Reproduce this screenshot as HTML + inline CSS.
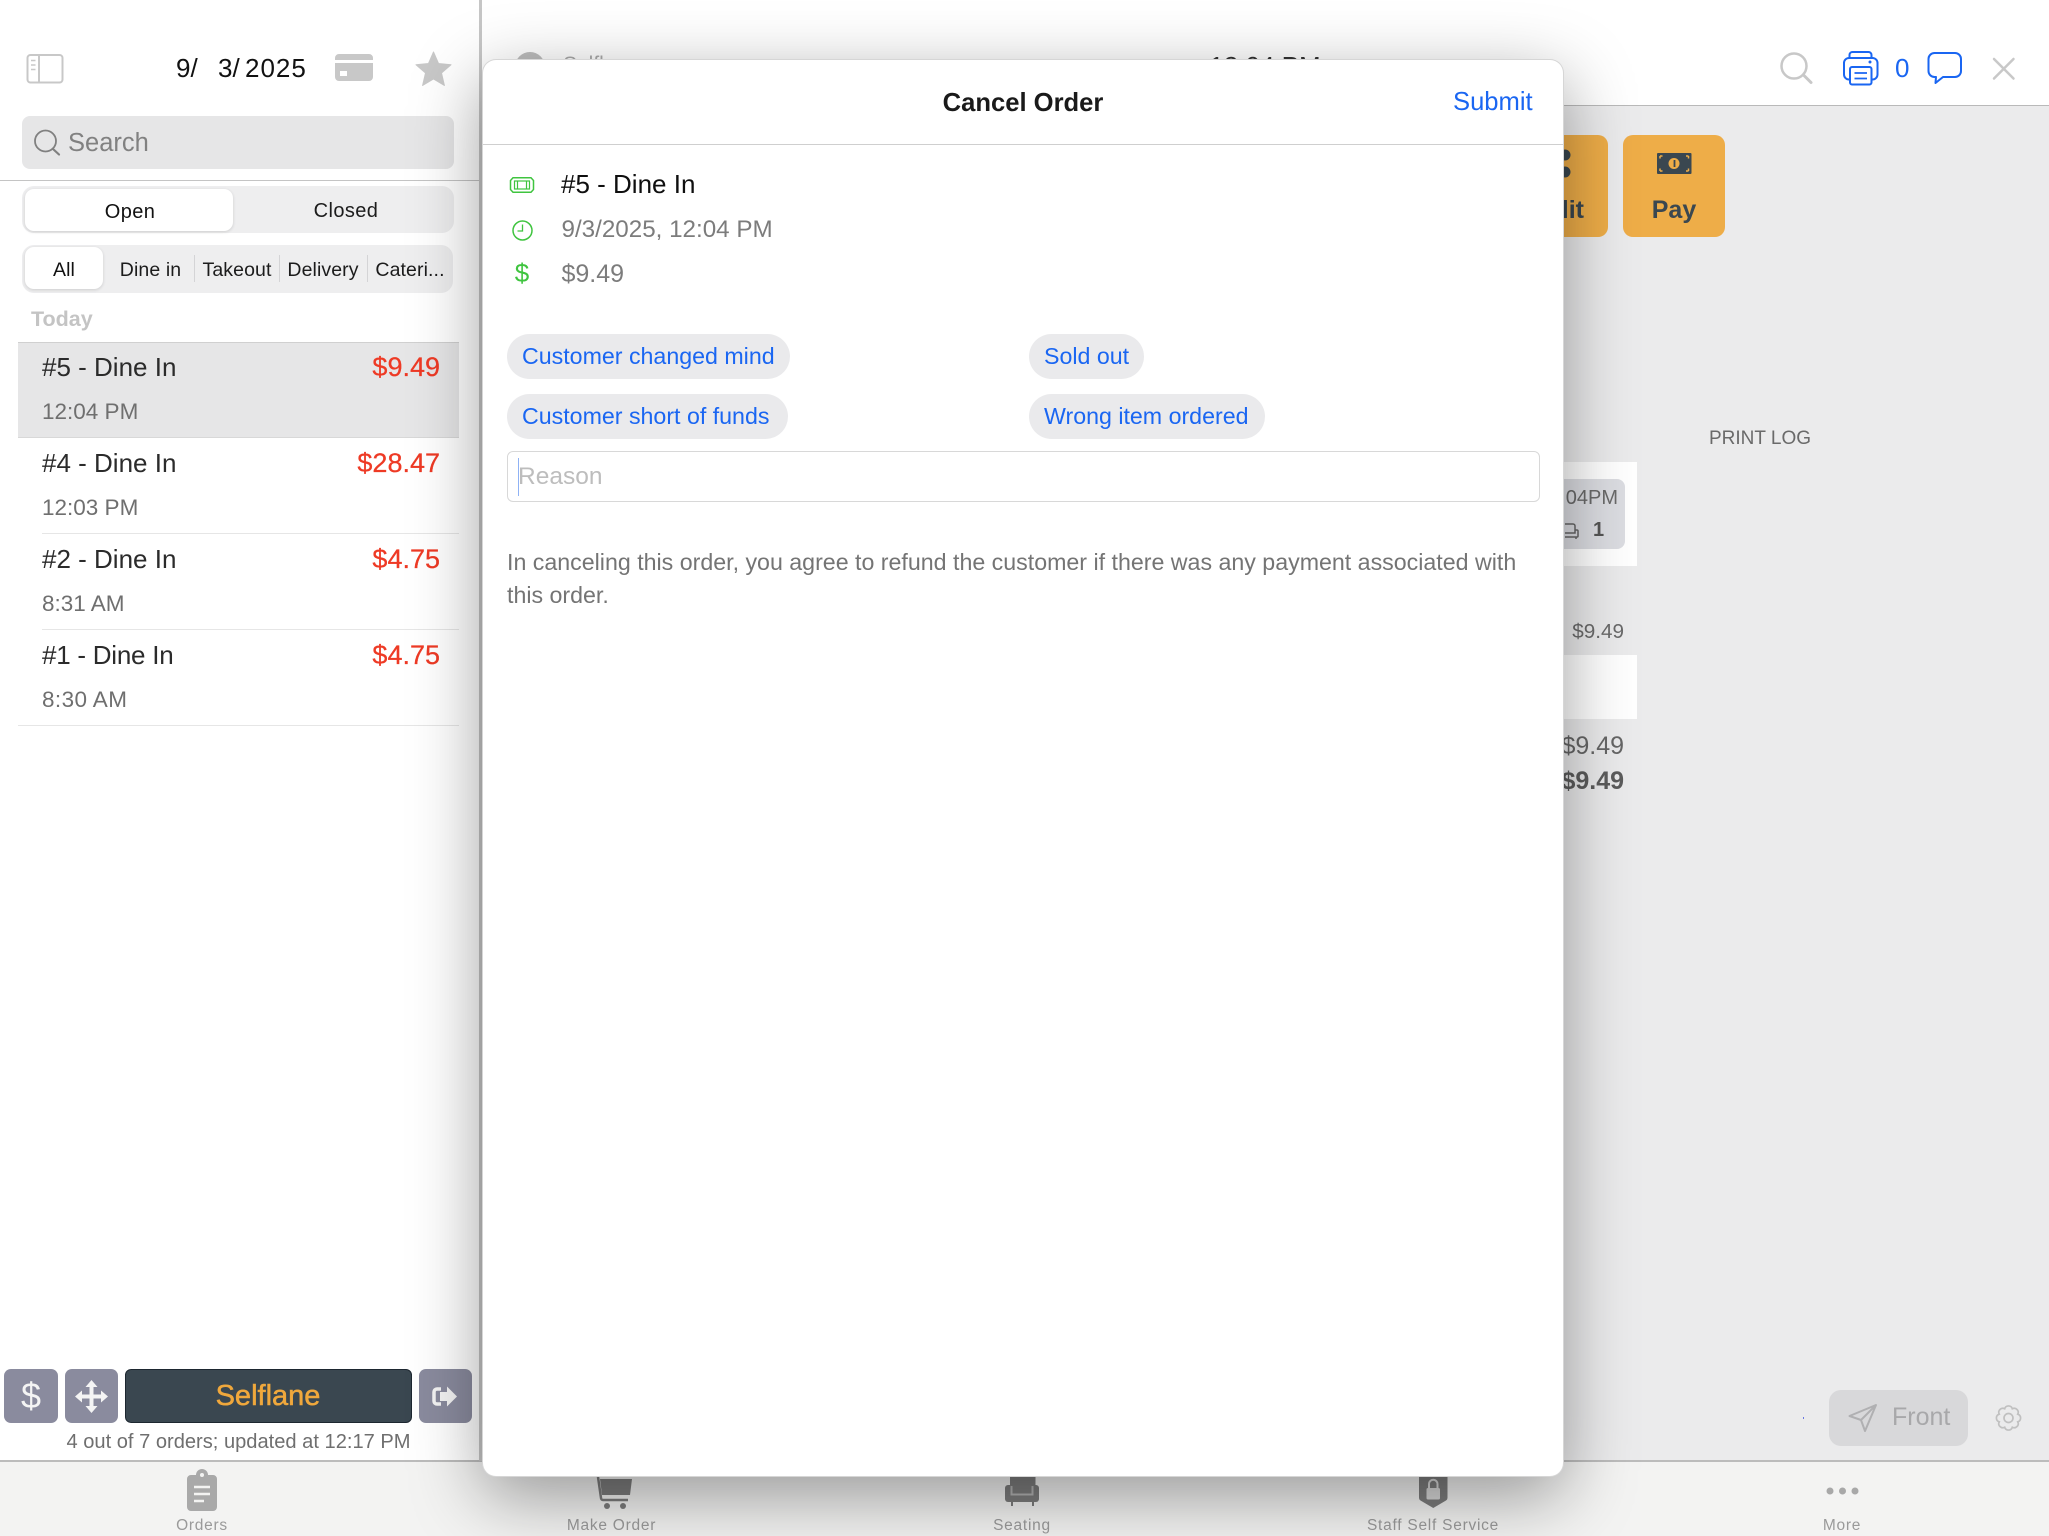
<!DOCTYPE html>
<html lang="en"><head><meta charset="utf-8"><title>Cancel Order</title>
<style>
html,body{margin:0;padding:0;background:#fff;width:2049px;height:1536px;overflow:hidden}
body{font-family:"Liberation Sans",sans-serif}
#p{position:absolute;left:0;top:0;width:2049px;height:1536px;overflow:hidden}
.b{position:absolute;box-sizing:border-box}
.t{position:absolute;white-space:nowrap;line-height:40px;height:40px;margin-top:-20px}
.c{transform:translateX(-50%)}
svg{position:absolute;left:0;top:0}
.name{font-size:26px;color:#2b2b2b;left:42px}
.time{font-size:22.5px;color:#6f6f6f;left:42px}
.price{font-size:27px;color:#ee3a25;right:1609px;-webkit-text-stroke:.25px #ee3a25}
.seg{font-size:19.5px;color:#1c1c1c;letter-spacing:.1px}
.tab{font-size:15.5px;letter-spacing:.75px;color:#9a9a9a}
.chip{position:absolute;box-sizing:border-box;background:#eaeaec;border-radius:23px;height:45px;line-height:45px;font-size:23.2px;color:#1a66f2;padding-left:15px;white-space:nowrap}
</style></head>
<body>
<div id="p">
<!-- main background -->
<div class="b" style="left:482px;top:0;width:1567px;height:105px;background:#fff"></div>
<div class="b" style="left:482px;top:105px;width:1567px;height:1356px;background:#ebebec;border-top:1.5px solid #b9b9b9"></div>
<div class="b" style="left:0;top:1460px;width:2049px;height:76px;background:#f3f3f2;border-top:2px solid #bcbcbc"></div>
<div class="b" style="left:479px;top:0;width:3px;height:1461px;background:#c6c6c6"></div>

<!-- behind modal -->
<div class="b" style="left:515px;top:52px;width:30px;height:30px;border-radius:50%;background:#bdbdbd"></div>
<div class="t" style="left:563px;top:65px;font-size:21px;color:#aaa">Selfl</div>
<div class="t c" style="left:1265px;top:66px;font-size:26px;color:#333">12:04 PM</div>

<div class="b" style="left:1450px;top:135px;width:158px;height:102px;background:#eead48;border-radius:10px"></div>
<div class="b" style="left:1623px;top:135px;width:102px;height:102px;background:#eead48;border-radius:10px"></div>
<div class="t" style="left:1500px;top:210px;width:84px;text-align:right;font-size:25px;font-weight:bold;color:#3a4750">Split</div>
<div class="t c" style="left:1674px;top:210px;font-size:25px;font-weight:bold;color:#3a4750">Pay</div>

<div class="t c" style="left:1760px;top:439px;font-size:19px;color:#6a6a6a">PRINT LOG</div>
<div class="b" style="left:1300px;top:462px;width:337px;height:104px;background:#fff"></div>
<div class="b" style="left:1300px;top:479px;width:325px;height:70px;background:#dcdde2;border-radius:8px"></div>
<div class="t" style="right:431px;top:498px;font-size:20px;color:#6a6a6a">12:04PM</div>
<div class="t" style="left:1593px;top:530px;font-size:20px;font-weight:bold;color:#555">1</div>
<div class="t" style="right:425px;top:632px;font-size:20.7px;color:#6a6a6a">$9.49</div>
<div class="b" style="left:1300px;top:655px;width:337px;height:64px;background:#fff"></div>
<div class="t" style="right:425px;top:746px;font-size:25px;color:#666">$9.49</div>
<div class="t" style="right:425px;top:781px;font-size:25px;font-weight:bold;color:#5c5c5c">$9.49</div>

<div class="b" style="left:1829px;top:1390px;width:139px;height:56px;background:#d8d8da;border-radius:12px"></div>
<div class="t" style="left:1892px;top:1417px;font-size:25px;color:#a8a8aa">Front</div>
<div class="b" style="left:1803px;top:1417px;width:1px;height:2px;background:#6a78e0"></div>

<!-- top right count -->
<div class="t" style="left:1895px;top:68px;font-size:26px;color:#1a66f2">0</div>

<!-- left panel -->
<div class="t" style="left:176px;top:68px;font-size:26px;color:#111">9/</div>
<div class="t" style="left:218px;top:68px;font-size:26px;color:#111">3/</div>
<div class="t" style="left:245px;top:68px;font-size:26px;letter-spacing:1px;color:#111">2025</div>

<div class="b" style="left:22px;top:116px;width:432px;height:53px;background:#e6e6e7;border-radius:8px"></div>
<div class="t" style="left:68px;top:143px;font-size:25.5px;color:#818181">Search</div>
<div class="b" style="left:0;top:180px;width:479px;height:1px;background:#c4c4c4"></div>

<div class="b" style="left:22px;top:186px;width:432px;height:47px;background:#eeeeef;border-radius:12px"></div>
<div class="b" style="left:25px;top:189px;width:208px;height:42px;background:#fff;border-radius:9px;box-shadow:0 1px 3px rgba(0,0,0,.14)"></div>
<div class="t c" style="left:130px;top:212px;font-size:20px;letter-spacing:.4px;color:#111">Open</div>
<div class="t c" style="left:346px;top:211px;font-size:20px;letter-spacing:.4px;color:#1c1c1c">Closed</div>

<div class="b" style="left:22px;top:245px;width:431px;height:48px;background:#eeeeef;border-radius:12px"></div>
<div class="b" style="left:25px;top:247px;width:78px;height:42px;background:#fff;border-radius:9px;box-shadow:0 1px 3px rgba(0,0,0,.14)"></div>
<div class="b" style="left:194px;top:255px;width:1px;height:27px;background:#d4d4d6"></div>
<div class="b" style="left:279px;top:255px;width:1px;height:27px;background:#d4d4d6"></div>
<div class="b" style="left:367px;top:255px;width:1px;height:27px;background:#d4d4d6"></div>
<div class="t c seg" style="left:64px;top:270px;color:#111">All</div>
<div class="t c seg" style="left:150.5px;top:270px">Dine in</div>
<div class="t c seg" style="left:237px;top:270px">Takeout</div>
<div class="t c seg" style="left:323px;top:270px">Delivery</div>
<div class="t c seg" style="left:410px;top:270px">Cateri...</div>

<div class="t" style="left:31px;top:319px;font-size:21.5px;font-weight:bold;color:#c4c4c4">Today</div>

<div class="b" style="left:18px;top:342px;width:441px;height:96px;background:#e6e6e7;border-top:1px solid #d0d0d0;border-bottom:1px solid #d8d8d8"></div>
<div class="t name" style="top:367px">#5 - Dine In</div>
<div class="t price" style="top:367px">$9.49</div>
<div class="t time" style="top:412px">12:04 PM</div>

<div class="t name" style="top:463px">#4 - Dine In</div>
<div class="t price" style="top:463px">$28.47</div>
<div class="t time" style="top:508px">12:03 PM</div>
<div class="b" style="left:42px;top:533px;width:417px;height:1px;background:#e6e6e6"></div>

<div class="t name" style="top:559px">#2 - Dine In</div>
<div class="t price" style="top:559px">$4.75</div>
<div class="t time" style="top:604px">8:31 AM</div>
<div class="b" style="left:42px;top:629px;width:417px;height:1px;background:#e6e6e6"></div>

<div class="t name" style="top:655px;letter-spacing:-.25px">#1 - Dine In</div>
<div class="t price" style="top:655px">$4.75</div>
<div class="t time" style="top:700px;letter-spacing:.4px">8:30 AM</div>
<div class="b" style="left:18px;top:725px;width:441px;height:1px;background:#e6e6e6"></div>

<div class="b" style="left:4px;top:1369px;width:54px;height:54px;background:#8a8b9e;border-radius:7px"></div>
<div class="b" style="left:65px;top:1369px;width:53px;height:54px;background:#8a8b9e;border-radius:7px"></div>
<div class="b" style="left:125px;top:1369px;width:287px;height:54px;background:#3a4750;border-radius:6px;border:1px solid #1d2730"></div>
<div class="b" style="left:419px;top:1369px;width:53px;height:54px;background:#8a8b9e;border-radius:7px"></div>
<div class="t c" style="left:31px;top:1396px;font-size:36px;color:#f4f4f4">$</div>
<div class="t c" style="left:268px;top:1396px;font-size:29px;color:#f0a83c;-webkit-text-stroke:.5px #f0a83c">Selflane</div>
<div class="t c" style="left:238.5px;top:1442px;font-size:20.1px;color:#6f6f6f">4 out of 7 orders; updated at 12:17 PM</div>

<!-- tab labels -->
<div class="t c tab" style="left:202px;top:1526px">Orders</div>
<div class="t c tab" style="left:611.5px;top:1526px">Make Order</div>
<div class="t c tab" style="left:1022px;top:1526px">Seating</div>
<div class="t c tab" style="left:1433px;top:1526px">Staff Self Service</div>
<div class="t c tab" style="left:1842px;top:1526px">More</div>

<!-- underlay icons -->
<svg width="2049" height="1536" viewBox="0 0 2049 1536">
  <!-- sidebar -->
  <rect x="27.5" y="55" width="35" height="27.5" rx="3" fill="none" stroke="#c8c8c8" stroke-width="2"/>
  <path d="M39 55V82.5" stroke="#c8c8c8" stroke-width="2"/>
  <path d="M31 60.5h4.5M31 65h4.500M31 69.5h4.500" stroke="#c8c8c8" stroke-width="1.5"/>
  <!-- card -->
  <path d="M339 54h30a4 4 0 0 1 4 4v2h-38v-2a4 4 0 0 1 4-4zM335 63h38v14a4 4 0 0 1-4 4h-30a4 4 0 0 1-4-4zM340 71v5h7v-5z" fill="#c8c8c8" fill-rule="evenodd"/>
  <!-- star -->
  <path d="M433.5 52l5 11.5 12.5 1.2-9.500 8.3 2.900 12.5-10.900-6.600-10.900 6.600 2.900-12.500-9.500-8.300 12.500-1.200z" fill="#c8c8c8" stroke="#c8c8c8" stroke-width="1" stroke-linejoin="round"/>
  <!-- search -->
  <circle cx="45.5" cy="141" r="10.5" fill="none" stroke="#808080" stroke-width="1.8"/>
  <path d="M53 149l6 5.500" stroke="#808080" stroke-width="2.2" stroke-linecap="round"/>
  <!-- move -->
  <path d="M91.5 1380l6 7h-4v7.500h7.500v-4l7 6-7 6v-4h-7.500v7.500h4l-6 7-6-7h4v-7.500h-7.500v4l-7-6 7-6v4h7.500v-7.500h-4z" fill="#f4f4f4"/>
  <!-- logout -->
  <path d="M441 1389h-4a3 3 0 0 0-3 3v9a3 3 0 0 0 3 3h4" fill="none" stroke="#f4f4f4" stroke-width="3.5"/>
  <path d="M447 1386.5l10 10-10 10v-5.500h-7v-9h7z" fill="#f4f4f4"/>
  <!-- orders -->
  <path d="M191 1475h5a6 6 0 0 1 12 0h5a4 4 0 0 1 4 4v28a4 4 0 0 1-4 4h-22a4 4 0 0 1-4-4v-28a4 4 0 0 1 4-4z" fill="#a9a9a9"/>
  <circle cx="202" cy="1475" r="2" fill="#f3f3f2"/>
  <path d="M194 1487h16M194 1494h16M194 1501h10" stroke="#f3f3f2" stroke-width="2.4"/>
  <!-- cart -->
  <path d="M590 1476h8" fill="none" stroke="#7d7d7d" stroke-width="2"/>
  <path d="M600 1479h32l-2 16h-28z" fill="#7d7d7d"/>
  <path d="M598 1477l3 21a2 2 0 0 0 2 2h25" fill="none" stroke="#7d7d7d" stroke-width="2.5"/>
  <circle cx="607" cy="1506" r="3" fill="#7d7d7d"/><circle cx="623" cy="1506" r="3" fill="#7d7d7d"/>
  <!-- chair -->
  <path d="M1010 1470h25.500v22h-25.500z" fill="#7d7d7d"/>
  <rect x="1005" y="1485" width="34" height="17" rx="3" fill="#7d7d7d"/>
  <path d="M1011.5 1486v8.500h21v-8.500" fill="none" stroke="#b4b4b4" stroke-width="2"/>
  <path d="M1012 1502v4M1033 1502v4" stroke="#7d7d7d" stroke-width="2"/>
  <!-- shield -->
  <path d="M1419 1470h28.500v28a3 3 0 0 1-1.500 2.500l-12.750 7.500-12.750-7.500a3 3 0 0 1-1.500-2.500z" fill="#7d7d7d"/>
  <rect x="1426.5" y="1488" width="13.5" height="11.5" rx="1.5" fill="#d8d8d8"/>
  <path d="M1429 1489v-5a4.250 4.250 0 0 1 8.500 0v5" fill="none" stroke="#d8d8d8" stroke-width="2"/>
  <!-- more -->
  <circle cx="1830" cy="1491" r="3.5" fill="#a8a8a8"/><circle cx="1842.5" cy="1491" r="3.5" fill="#a8a8a8"/><circle cx="1855" cy="1491" r="3.5" fill="#a8a8a8"/>
  <!-- top right -->
  <circle cx="1794" cy="66" r="12.5" fill="none" stroke="#c8c8c8" stroke-width="2.5"/>
  <path d="M1803.5 75l7.500 7.500" stroke="#c8c8c8" stroke-width="3" stroke-linecap="round"/>
  <path d="M1849.5 58v-3a3 3 0 0 1 3-3h16a3 3 0 0 1 3 3v3" fill="none" stroke="#1a66f2" stroke-width="2"/>
  <rect x="1844" y="58" width="33.5" height="21.5" rx="5" fill="none" stroke="#1a66f2" stroke-width="2"/>
  <rect x="1850" y="67" width="21.5" height="17.5" rx="2" fill="#fff" stroke="#1a66f2" stroke-width="2"/>
  <path d="M1854.5 73h12.500M1854.5 78.500h12.500" stroke="#1a66f2" stroke-width="1.8"/>
  <circle cx="1870" cy="62" r="1.5" fill="#1a66f2"/>
  <path d="M1934 53h21a6 6 0 0 1 6 6v12a6 6 0 0 1-6 6h-12l-7.500 6 .5-6h-1.500a6 6 0 0 1-6-6v-12a6 6 0 0 1 6-6z" fill="none" stroke="#1a66f2" stroke-width="2" stroke-linejoin="round"/>
  <path d="M1994 59l19.500 19.500M2013.5 59l-19.500 19.500" stroke="#c8c8c8" stroke-width="2.5" stroke-linecap="round"/>
  <!-- scissors + money -->
  <circle cx="1565" cy="155" r="5.5" fill="#3a4750"/><circle cx="1565" cy="172" r="5.5" fill="#3a4750"/>
  <rect x="1657" y="153" width="34.5" height="21" rx="1" fill="#3a4750"/>
  <circle cx="1674" cy="163.5" r="5.5" fill="#eead48"/>
  <path d="M1674.5 160v7" stroke="#3a4750" stroke-width="1.8"/>
  <path d="M1660 156h2.500M1660 156v2.500M1688.5 156h-2.500M1688.5 156v2.500M1660 171h2.500M1660 171v-2.500M1688.5 171h-2.500M1688.5 171v-2.500" stroke="#eead48" stroke-width="1.5"/>
  <!-- small chair -->
  <path d="M1565 524h8a2 2 0 0 1 2 2v7h-10M1575 530h2a1 1 0 0 1 1 1v5a1 1 0 0 1-1 1h-12M1576 537v2" fill="none" stroke="#666" stroke-width="1.5"/>
  <!-- plane -->
  <path d="M1876 1405l-26.500 11 11.500 4 4 11zM1876 1405l-15 15" fill="none" stroke="#b0b0b2" stroke-width="2" stroke-linejoin="round"/>
  <!-- gear -->
  <g transform="translate(2008.5 1418)" fill="none" stroke="#c0c0c0" stroke-width="1.7">
    <path d="M9.24 3.83A4 4 0 0 1 3.83 9.24A4 4 0 0 1-3.83 9.24A4 4 0 0 1-9.24 3.83A4 4 0 0 1-9.24-3.83A4 4 0 0 1-3.83-9.24A4 4 0 0 1 3.83-9.24A4 4 0 0 1 9.24-3.83A4 4 0 0 1 9.24 3.83z"/>
    <circle r="4.5"/>
  </g>
</svg>

<!-- shadow + modal -->
<div class="b" style="left:482px;top:59px;width:1082px;height:1418px;background:#fff;border-radius:14px;border:1px solid rgba(0,0,0,.16);box-shadow:0 20px 70px rgba(0,0,0,.38)"></div>

<div class="t c" style="left:1023px;top:102.5px;font-size:25.6px;font-weight:bold;color:#1a1a1a">Cancel Order</div>
<div class="t" style="left:1453px;top:102px;font-size:25.6px;color:#1a66f2">Submit</div>
<div class="b" style="left:483px;top:144px;width:1080px;height:1px;background:#cfcfcf"></div>

<svg width="2049" height="1536" viewBox="0 0 2049 1536" style="pointer-events:none">
  <path d="M513 177.8h18l2.500 2.700v9l-2.500 2.700h-18l-2.500-2.700v-9z" fill="none" stroke="#3fc43f" stroke-width="1.5"/>
  <rect x="514.5" y="181" width="15" height="8" fill="none" stroke="#3fc43f" stroke-width="1.2"/>
  <path d="M517.5 181v8M526.5 181v8" stroke="#3fc43f" stroke-width="1.2"/>
  <circle cx="522.5" cy="230.5" r="9.5" fill="none" stroke="#3fc43f" stroke-width="1.5"/>
  <path d="M522.5 224.5v6.500h-5" fill="none" stroke="#3fc43f" stroke-width="1.3"/>
</svg>

<div class="t" style="left:561px;top:184px;font-size:26px;color:#0f0f0f">#5 - Dine In</div>
<div class="t" style="left:561.5px;top:230px;font-size:24.2px;color:#7c7c7c">9/3/2025, 12:04 PM</div>
<div class="t c" style="left:522px;top:273px;font-size:26px;color:#3fc43f">$</div>
<div class="t" style="left:561.5px;top:274px;font-size:25px;color:#7c7c7c">$9.49</div>

<div class="chip" style="left:507px;top:334px;width:283px">Customer changed mind</div>
<div class="chip" style="left:1029px;top:334px;width:115px">Sold out</div>
<div class="chip" style="left:507px;top:394px;width:281px">Customer short of funds</div>
<div class="chip" style="left:1029px;top:394px;width:236px">Wrong item ordered</div>

<div class="b" style="left:507px;top:451px;width:1033px;height:51px;border:1.5px solid #d8d8d8;border-radius:6px;background:#fff"></div>
<div class="b" style="left:517.5px;top:458px;width:1px;height:38px;background:#8fb2f5"></div>
<div class="t" style="left:518px;top:477px;font-size:24.5px;color:#bdbdbd">Reason</div>

<div class="t" style="left:507px;top:561.5px;font-size:23.2px;color:#747474">In canceling this order, you agree to refund the customer if there was any payment associated with</div>
<div class="t" style="left:507px;top:594.5px;font-size:23.2px;color:#747474">this order.</div>
</div>
</body></html>
